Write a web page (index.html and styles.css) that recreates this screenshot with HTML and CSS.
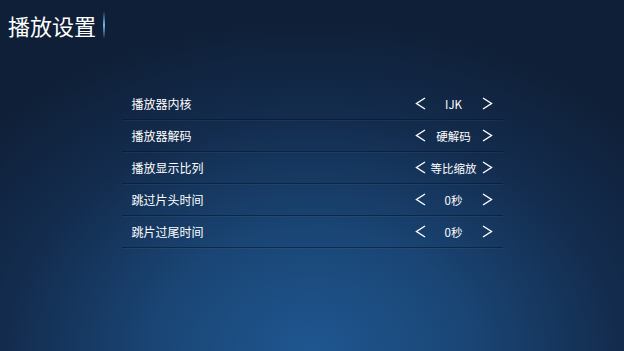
FILE: index.html
```html
<!DOCTYPE html>
<html lang="zh-CN">

<head>
    <meta charset="utf-8">
    <title>播放设置</title>
    <link rel="stylesheet" href="styles.css">
</head>

<body>
    <div class="header">
        <div class="title">播放设置</div>
        <div class="titleBar"></div>
    </div>

    <div class="panel">
        <div class="row">
            <div class="label">播放器内核</div>
            <div class="picker">
                <svg class="arrow" viewBox="0 0 11 13"><polyline points="10,1 1.5,6.5 10,12" /></svg>
                <div class="value">IJK</div>
                <svg class="arrow" viewBox="0 0 11 13"><polyline points="1,1 9.5,6.5 1,12" /></svg>
            </div>
        </div>
        <div class="row">
            <div class="label">播放器解码</div>
            <div class="picker">
                <svg class="arrow" viewBox="0 0 11 13"><polyline points="10,1 1.5,6.5 10,12" /></svg>
                <div class="value">硬解码</div>
                <svg class="arrow" viewBox="0 0 11 13"><polyline points="1,1 9.5,6.5 1,12" /></svg>
            </div>
        </div>
        <div class="row">
            <div class="label">播放显示比列</div>
            <div class="picker">
                <svg class="arrow" viewBox="0 0 11 13"><polyline points="10,1 1.5,6.5 10,12" /></svg>
                <div class="value">等比缩放</div>
                <svg class="arrow" viewBox="0 0 11 13"><polyline points="1,1 9.5,6.5 1,12" /></svg>
            </div>
        </div>
        <div class="row">
            <div class="label">跳过片头时间</div>
            <div class="picker">
                <svg class="arrow" viewBox="0 0 11 13"><polyline points="10,1 1.5,6.5 10,12" /></svg>
                <div class="value">0秒</div>
                <svg class="arrow" viewBox="0 0 11 13"><polyline points="1,1 9.5,6.5 1,12" /></svg>
            </div>
        </div>
        <div class="row">
            <div class="label">跳片过尾时间</div>
            <div class="picker">
                <svg class="arrow" viewBox="0 0 11 13"><polyline points="10,1 1.5,6.5 10,12" /></svg>
                <div class="value">0秒</div>
                <svg class="arrow" viewBox="0 0 11 13"><polyline points="1,1 9.5,6.5 1,12" /></svg>
            </div>
        </div>
    </div>
</body>

</html>
```

FILE: styles.css
```css
html,
body {
    margin: 0;
    height: 100%;
}

body {
    font-family: "Noto Sans CJK SC", "Noto Sans", sans-serif;
    color: #ffffff;
    background: radial-gradient(ellipse 70% 95% at 50% 100%, #1f5690 0%, #1a4676 35%, #132c4e 70%, #0f1f37 100%);
    overflow: hidden;
}

.header {
    display: flex;
    align-items: center;
    height: 50px;
    padding-left: 8px;
}

.title {
    font-size: 22px;
    line-height: 26px;
    letter-spacing: 0;
}

.titleBar {
    width: 2px;
    height: 28px;
    margin-left: 7px;
    background: linear-gradient(to bottom, rgba(90, 160, 220, 0), #6fb4ec 50%, rgba(90, 160, 220, 0));
}

.panel {
    width: 381px;
    margin: 38px auto 0;
}

.row {
    display: flex;
    justify-content: space-between;
    align-items: center;
    height: 31px;
    padding: 0 10px;
    border-bottom: 1px solid rgba(8, 20, 38, 0.55);
    box-shadow: 0 1px 0 rgba(120, 170, 220, 0.08);
}

.label {
    font-size: 12px;
}

.picker {
    display: flex;
    align-items: center;
}

.value {
    width: 56px;
    text-align: center;
    font-size: 11.5px;
}

.arrow {
    width: 11px;
    height: 13px;
    fill: none;
    stroke: #ffffff;
    stroke-width: 1.4;
}
```
